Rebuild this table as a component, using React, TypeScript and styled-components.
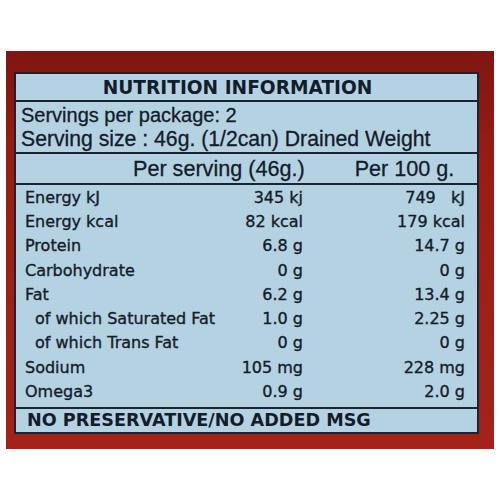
import React from 'react';
import styled, { createGlobalStyle } from 'styled-components';

const GlobalStyle = createGlobalStyle`
  body {
    margin: 0;
    background: #ffffff;
  }
`;

interface Nutrient {
  name: string,
  perServing: string,
  per100: string,
  sub?: boolean,
}

const nutrients: Nutrient[] = [
  { name: 'Energy kJ', perServing: '345 kj', per100: '749   kJ' },
  { name: 'Energy kcal', perServing: '82 kcal', per100: '179 kcal' },
  { name: 'Protein', perServing: '6.8 g', per100: '14.7 g' },
  { name: 'Carbohydrate', perServing: '0 g', per100: '0 g' },
  { name: 'Fat', perServing: '6.2 g', per100: '13.4 g' },
  { name: 'of which Saturated Fat', perServing: '1.0 g', per100: '2.25 g', sub: true },
  { name: 'of which Trans Fat', perServing: '0 g', per100: '0 g', sub: true },
  { name: 'Sodium', perServing: '105 mg', per100: '228 mg' },
  { name: 'Omega3', perServing: '0.9 g', per100: '2.0 g' },
];

const App: React.FC = () => {
  return (
    <Page>
      <GlobalStyle />
      <Panel>
        <Label>
          <TitleRow>NUTRITION INFORMATION</TitleRow>
          <ServingsBlock>
            <ServingLine>Servings per package: 2</ServingLine>
            <ServingLine wide>Serving size : 46g. (1/2can) Drained Weight</ServingLine>
          </ServingsBlock>
          <HeaderRow>
            <span>Per serving (46g.)</span>
            <span>Per 100 g.</span>
          </HeaderRow>
          <NutrientTable>
            {nutrients.map((n) => (
              <NutrientRow key={n.name}>
                <NutrientName sub={n.sub}>{n.name}</NutrientName>
                <Value>{n.perServing}</Value>
                <Value>{n.per100}</Value>
              </NutrientRow>
            ))}
          </NutrientTable>
          <FooterRow>NO PRESERVATIVE/NO ADDED MSG</FooterRow>
        </Label>
      </Panel>
    </Page>
  );
}

const ink = '#131c2a';
const rule = '#1a2434';

const Page = styled.div`
  padding: 51px 0 0 6px;
`;

const Panel = styled.div`
  width: 488px;
  height: 398px;
  box-sizing: border-box;
  padding: 21px 15px 15px 8px;
  background: linear-gradient(180deg, #7f1610 0%, #9a1d14 30%, #a3231a 100%);
`;

const Label = styled.div`
  height: 100%;
  box-sizing: border-box;
  display: flex;
  flex-direction: column;
  background: #b5d2e3;
  border: 2px solid ${rule};
  color: ${ink};
`;

const TitleRow = styled.div`
  height: 26px;
  display: flex;
  align-items: center;
  justify-content: center;
  padding-right: 18px;
  border-bottom: 2px solid ${rule};
  font-family: "DejaVu Sans", sans-serif;
  font-weight: bold;
  font-size: 18.6px;
`;

const ServingsBlock = styled.div`
  height: 52px;
  box-sizing: border-box;
  padding: 1px 0 0 5px;
  border-bottom: 2px solid ${rule};
  font-family: "Liberation Sans", Arial, sans-serif;
  line-height: 24px;
  -webkit-text-stroke: 0.3px ${ink};
`;

const ServingLine = styled.div<{ wide?: boolean }>`
  font-size: ${props => props.wide ? 21.2 : 20}px;
  white-space: nowrap;
`;

const HeaderRow = styled.div`
  height: 29px;
  display: flex;
  align-items: center;
  gap: 50px;
  padding-left: 117px;
  border-bottom: 2px solid ${rule};
  font-family: "Liberation Sans", Arial, sans-serif;
  font-size: 21.6px;
  white-space: nowrap;
  -webkit-text-stroke: 0.3px ${ink};
`;

const NutrientTable = styled.div`
  display: flex;
  flex-direction: column;
  padding: 0 0 3px 9px;
  border-bottom: 2px solid ${rule};
  font-family: "DejaVu Sans", sans-serif;
  font-size: 16px;
  -webkit-text-stroke: 0.35px ${ink};
`;

const NutrientRow = styled.div`
  display: grid;
  grid-template-columns: minmax(0, 1fr) 130px 162px;
  padding-right: 12px;
  height: 24.3px;
  align-items: center;
`;

const NutrientName = styled.span<{ sub?: boolean }>`
  padding-left: ${props => props.sub ? 10 : 0}px;
  white-space: nowrap;
`;

const Value = styled.span`
  text-align: right;
  white-space: pre;
`;

const FooterRow = styled.div`
  flex: 1;
  display: flex;
  align-items: center;
  padding-left: 11px;
  font-family: "DejaVu Sans", sans-serif;
  font-weight: bold;
  font-size: 17.6px;
  white-space: nowrap;
`;

export default App;
